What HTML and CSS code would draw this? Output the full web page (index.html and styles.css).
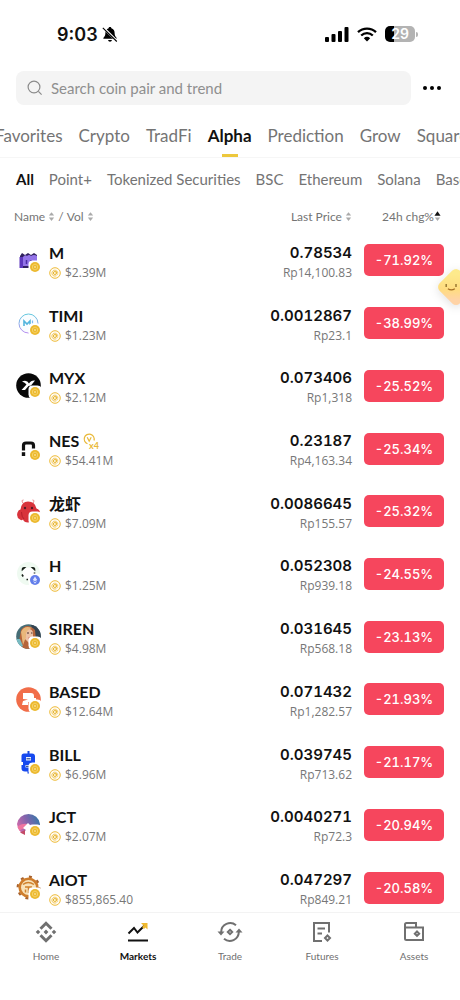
FILE: index.html
```
<!DOCTYPE html>
<html lang="en">
<head>
    <meta charset="UTF-8">
    <meta name="viewport" content="width=device-width, initial-scale=1.0">
    <title>Markets</title>
    <link rel="stylesheet" href="styles.css">
</head>
<body>

    <!-- shared icons -->
    <svg class="sprite" width="0" height="0" aria-hidden="true">
        <symbol id="sort" viewBox="0 0 8 12">
            <path d="M4 1 7 4.800H1z"/>
            <path d="M4 11 1 7.200h6z"/>
        </symbol>
        <symbol id="sort-asc" viewBox="0 0 8 12">
            <path d="M4 0 7.500 5H.5z" fill="#111"/>
            <path d="M4 11 1 7.200h6z"/>
        </symbol>
        <symbol id="alpha" viewBox="0 0 12 12">
            <circle cx="6" cy="6" r="5.300" fill="#fffaf0" stroke="#eebd3d" stroke-width="1"/>
            <circle cx="5.900" cy="6" r="1.500" fill="none" stroke="#e8b52c" stroke-width="1"/>
            <path d="M7.600 4.300v2.500q.2.900 1 .6M8.700 6.500a2.900 2.900 0 1 0-1.300 2.100" fill="none" stroke="#e8b52c" stroke-width=".7"/>
        </symbol>
        <symbol id="bnb" viewBox="0 0 25 25">
            <rect x="12.500" y="12.500" width="13" height="13" rx="4" fill="#fff"/>
            <circle cx="19" cy="19" r="5" fill="#ecb92f"/>
            <path d="m19 16 2.500 1.500v3L19 22l-2.500-1.500v-3z" fill="none" stroke="#f7d774" stroke-width=".8"/>
            <path d="m19 17.900 1.100 1.100-1.100 1.100-1.100-1.100z" fill="#fbe9ae"/>
        </symbol>
        <symbol id="eth" viewBox="0 0 25 25">
            <rect x="12.500" y="12.500" width="13" height="13" rx="4" fill="#fff"/>
            <circle cx="19" cy="19" r="5" fill="#627eea"/>
            <path d="m19 15.500 2.200 3.500-2.200 1.300-2.200-1.300zM16.900 20l2.100 1.300 2.100-1.300-2.100 2.700z" fill="#dfe5ff"/>
        </symbol>
    </svg>

    <div class="status-bar">
        <div class="status-left">
            <span>9:03</span>
            <svg width="16" height="17" viewBox="0 0 16 17">
                <path d="M8 1c.9 0 1.300.5 1.400 1.200 2.200.7 3.200 2.500 3.200 4.600 0 2.600.7 3.700 1.900 4.900.4.500.2 1.100-.5 1.100H2c-.7 0-.9-.6-.5-1.100 1.200-1.200 1.900-2.300 1.900-4.900 0-2.100 1-3.900 3.200-4.600C6.700 1.500 7.100 1 8 1zM6 14h4q-.4 1.800-2 1.800T6 14z"/>
                <path d="m1.500 1.800 13.800 13.600" stroke="#fff" stroke-width="2.400"/>
                <path d="m.8 1.800 14 13.700" stroke="#000" stroke-width="1.100"/>
            </svg>
        </div>
        <div class="status-right">
            <svg width="24" height="15" viewBox="0 0 24 15">
                <rect x="0" y="10" width="4" height="5" rx="1"/>
                <rect x="6.500" y="7" width="4" height="8" rx="1"/>
                <rect x="13" y="4" width="4" height="11" rx="1"/>
                <rect x="19.500" y="0" width="4" height="15" rx="1"/>
            </svg>
            <svg width="20" height="15" viewBox="0 0 20 15">
                <path d="M1 5.200a13 13 0 0 1 18 0M4.200 8.500a8.400 8.400 0 0 1 11.600 0" fill="none" stroke="#000" stroke-width="2.300"/>
                <path d="M10 14.500 6.800 11.200a4.700 4.700 0 0 1 6.400 0z"/>
            </svg>
            <div class="battery">29</div>
        </div>
    </div>

    <div class="search-row">
        <label class="search">
            <svg width="16" height="16" viewBox="0 0 16 16" fill="none" stroke="#8b8b8b" stroke-width="1.200">
                <circle cx="7" cy="7" r="5.900"/>
                <path d="m11.400 11.400 3.200 3.300"/>
            </svg>
            <input type="search" placeholder="Search coin pair and trend" aria-label="Search coin pair and trend">
        </label>
        <button class="more" aria-label="More">
            <svg width="18" height="4" viewBox="0 0 18 4">
                <circle cx="2" cy="2" r="2"/><circle cx="9" cy="2" r="2"/><circle cx="16" cy="2" r="2"/>
            </svg>
        </button>
    </div>

    <nav class="tabs">
        <a href="#">Favorites</a>
        <a href="#">Crypto</a>
        <a href="#">TradFi</a>
        <a href="#" class="active">Alpha</a>
        <a href="#">Prediction</a>
        <a href="#">Grow</a>
        <a href="#">Square</a>
    </nav>

    <nav class="filters">
        <a href="#" class="active">All</a>
        <a href="#">Point+</a>
        <a href="#">Tokenized Securities</a>
        <a href="#">BSC</a>
        <a href="#">Ethereum</a>
        <a href="#">Solana</a>
        <a href="#">Base</a>
    </nav>

    <main>
        <table class="coins">
            <thead>
                <tr>
                    <th class="name">
                        <button>Name <svg class="sort"><use href="#sort"/></svg></button> /
                        <button>Vol <svg class="sort"><use href="#sort"/></svg></button>
                    </th>
                    <th><button>Last Price <svg class="sort"><use href="#sort"/></svg></button></th>
                    <th class="change"><button>24h chg%<svg class="sort"><use href="#sort-asc"/></svg></button></th>
                </tr>
            </thead>
            <tbody>
                <tr>
                    <td>
                        <div class="coin">
                            <svg class="logo" viewBox="0 0 25 25">
                                <path d="M4 8 6 5l3 2 3-2 3 2 3-2 3 2v13H4z" fill="#30215f"/>
                                <path d="M3.500 9H7v11H3.500z" fill="#5d37bd"/>
                                <path d="M7 9q2-3 4-1 2-2 4 0 3-2 6 0v10H7z" fill="#9374e8"/>
                                <path d="M10.500 12v4M15 12v3" stroke="#4b2ba3" stroke-width="1.500"/>
                                <use href="#bnb"/>
                            </svg>
                            <div>
                                <div class="symbol">M</div>
                                <div class="volume"><svg><use href="#alpha"/></svg>$2.39M</div>
                            </div>
                        </div>
                    </td>
                    <td><div class="price">0.78534</div><div class="fiat">Rp14,100.83</div></td>
                    <td class="change"><button class="pct">-71.92%</button></td>
                </tr>
                <tr>
                    <td>
                        <div class="coin">
                            <svg class="logo" viewBox="0 0 25 25">
                                <defs>
                                    <linearGradient id="timi" x1="0" y1="0" x2="0" y2="1">
                                        <stop offset="0" stop-color="#62c9dd"/><stop offset="1" stop-color="#b78df0"/>
                                    </linearGradient>
                                </defs>
                                <circle cx="12.500" cy="12.500" r="9.500" fill="#fafdff" stroke="url(#timi)"/>
                                <path d="M8 15v-5l3 3 3-3v4" fill="none" stroke="#53b5dd" stroke-width="1.600"/>
                                <path d="M16.500 9.500v3" stroke="#80b9ee" stroke-width="1.200"/>
                                <use href="#bnb"/>
                            </svg>
                            <div>
                                <div class="symbol">TIMI</div>
                                <div class="volume"><svg><use href="#alpha"/></svg>$1.23M</div>
                            </div>
                        </div>
                    </td>
                    <td><div class="price">0.0012867</div><div class="fiat">Rp23.1</div></td>
                    <td class="change"><button class="pct">-38.99%</button></td>
                </tr>
                <tr>
                    <td>
                        <div class="coin">
                            <svg class="logo" viewBox="0 0 25 25">
                                <circle cx="12.500" cy="12.500" r="12.300" fill="#080808"/>
                                <path d="M6 8.500q5-2 7 2Q15 7 19 7.500l-4 5-2.500.5L9 17H5.500l5-5.500Q9 9.500 6 8.500z" fill="#fff"/>
                                <use href="#bnb"/>
                            </svg>
                            <div>
                                <div class="symbol">MYX</div>
                                <div class="volume"><svg><use href="#alpha"/></svg>$2.12M</div>
                            </div>
                        </div>
                    </td>
                    <td><div class="price">0.073406</div><div class="fiat">Rp1,318</div></td>
                    <td class="change"><button class="pct">-25.52%</button></td>
                </tr>
                <tr>
                    <td>
                        <div class="coin">
                            <svg class="logo" viewBox="0 0 25 25">
                                <path d="M7.500 14.500V9.500Q7.500 7 10 7h5q2.500 0 2.500 2.500V15" fill="none" stroke="#111" stroke-width="3.200"/>
                                <path d="M5.800 16.200h3.400v3.800H5.800z" fill="#111"/>
                                <use href="#bnb"/>
                            </svg>
                            <div>
                                <div class="symbol">NES
                                    <svg class="boost" viewBox="0 0 17 17">
                                        <path d="M4.500 10.800A5 5 0 1 1 11 7.500" fill="none" stroke="#e9b938" stroke-width="1.200"/>
                                        <path d="m4.200 4.200 2 4 2-4" fill="none" stroke="#e9b938" stroke-width="1.200"/>
                                        <text x="6" y="15.500">x4</text>
                                    </svg>
                                </div>
                                <div class="volume"><svg><use href="#alpha"/></svg>$54.41M</div>
                            </div>
                        </div>
                    </td>
                    <td><div class="price">0.23187</div><div class="fiat">Rp4,163.34</div></td>
                    <td class="change"><button class="pct">-25.34%</button></td>
                </tr>
                <tr>
                    <td>
                        <div class="coin">
                            <svg class="logo" viewBox="0 0 25 25">
                                <path d="M7 4Q5 1 7.500 1M17 4q2-3-.5-3" fill="none" stroke="#e97c7f" stroke-width="1"/>
                                <path d="M12 2.500q7 0 8.500 7 4 1.500 3.500 5l-3 1q-1 8-9 8-4 0-5-3-1.500 1.500-3 0-4-2-2.500-7 1-3 3-3 1-8 7.500-8z" fill="#d8333b"/>
                                <circle cx="9" cy="9" r="1.200" fill="#551b25"/><circle cx="16" cy="9" r="1.200" fill="#551b25"/>
                                <path d="M5.500 13q0 5 2.500 7" fill="none" stroke="#b51f2b"/>
                                <use href="#bnb"/>
                            </svg>
                            <div>
                                <div class="symbol" lang="zh">龙虾</div>
                                <div class="volume"><svg><use href="#alpha"/></svg>$7.09M</div>
                            </div>
                        </div>
                    </td>
                    <td><div class="price">0.0086645</div><div class="fiat">Rp155.57</div></td>
                    <td class="change"><button class="pct">-25.32%</button></td>
                </tr>
                <tr>
                    <td>
                        <div class="coin">
                            <svg class="logo" viewBox="0 0 25 25">
                                <circle cx="12.500" cy="12.500" r="11.500" fill="#effaf1"/>
                                <circle cx="12.500" cy="12.500" r="6" fill="#fff"/>
                                <path d="M6.500 8.500q0-2 2-1.800zM16.500 6.700q2-.2 2 1.800zM6 13.500l1.200 2M10.500 18.500h1.500M18.500 11.500v1.500" fill="#182019" stroke="#182019" stroke-width="1.600"/>
                                <use href="#eth"/>
                            </svg>
                            <div>
                                <div class="symbol">H</div>
                                <div class="volume"><svg><use href="#alpha"/></svg>$1.25M</div>
                            </div>
                        </div>
                    </td>
                    <td><div class="price">0.052308</div><div class="fiat">Rp939.18</div></td>
                    <td class="change"><button class="pct">-24.55%</button></td>
                </tr>
                <tr>
                    <td>
                        <div class="coin">
                            <svg class="logo" viewBox="0 0 25 25">
                                <defs><clipPath id="round"><circle cx="12.500" cy="12.500" r="12.300"/></clipPath></defs>
                                <g clip-path="url(#round)">
                                    <path d="M0 0h25v25H0z" fill="#466d76"/>
                                    <path d="M15 1h10v13l-5 2z" fill="#354451"/>
                                    <path d="M7 25 3 17 5 6q6-8 14 0l1 10-5 9z" fill="#b5643a"/>
                                    <path d="M10 6q5-3 7 2v6l-4 5-4-4z" fill="#edc1a4"/>
                                    <path d="M5 8q3-7 11-4-7 2-6 9l-3 8z" fill="#e9b77b"/>
                                    <path d="M11 9h2M15 9h1.500" stroke="#49302d"/>
                                    <path d="M12.500 14h2.500" stroke="#ba3c42" stroke-width="1.200"/>
                                    <path d="M0 15h4l3 7-4 2z" fill="#77bbc2"/>
                                </g>
                                <use href="#bnb"/>
                            </svg>
                            <div>
                                <div class="symbol">SIREN</div>
                                <div class="volume"><svg><use href="#alpha"/></svg>$4.98M</div>
                            </div>
                        </div>
                    </td>
                    <td><div class="price">0.031645</div><div class="fiat">Rp568.18</div></td>
                    <td class="change"><button class="pct">-23.13%</button></td>
                </tr>
                <tr>
                    <td>
                        <div class="coin">
                            <svg class="logo" viewBox="0 0 25 25">
                                <circle cx="12.500" cy="12.500" r="12.300" fill="#f16d49"/>
                                <path d="M7 6h8q3 0 3 3v2h2v4h-8v3H6l1-4 5-1.500L7 12z" fill="#fff"/>
                                <use href="#bnb"/>
                            </svg>
                            <div>
                                <div class="symbol">BASED</div>
                                <div class="volume"><svg><use href="#alpha"/></svg>$12.64M</div>
                            </div>
                        </div>
                    </td>
                    <td><div class="price">0.071432</div><div class="fiat">Rp1,282.57</div></td>
                    <td class="change"><button class="pct">-21.93%</button></td>
                </tr>
                <tr>
                    <td>
                        <div class="coin">
                            <svg class="logo" viewBox="0 0 25 25">
                                <path d="M12.500 1v4M12.500 20v3.500" stroke="#1649df" stroke-width="2"/>
                                <path d="M8 3.500h8q3 0 3 3v12q0 3-3 3H9q-3.500 0-3.500-3V15H7v-3H5.500V6q0-2.500 2.500-2.500z" fill="#1649ef"/>
                                <path d="M10 7h5v3.500h-5zM9.500 15h6v2.500h-6z" fill="#e8efff"/>
                                <path d="M10.500 8.800h4M10 16.300h4" stroke="#173379"/>
                                <use href="#bnb"/>
                            </svg>
                            <div>
                                <div class="symbol">BILL</div>
                                <div class="volume"><svg><use href="#alpha"/></svg>$6.96M</div>
                            </div>
                        </div>
                    </td>
                    <td><div class="price">0.039745</div><div class="fiat">Rp713.62</div></td>
                    <td class="change"><button class="pct">-21.17%</button></td>
                </tr>
                <tr>
                    <td>
                        <div class="coin">
                            <svg class="logo" viewBox="0 0 25 25">
                                <defs>
                                    <linearGradient id="jct" x1="0" y1=".7" x2="1" y2=".3">
                                        <stop offset="0" stop-color="#d76baa"/><stop offset=".5" stop-color="#8264ad"/><stop offset="1" stop-color="#3677a8"/>
                                    </linearGradient>
                                </defs>
                                <path d="M1 12A11.600 11.600 0 0 1 24 12v3H13v8Q2 22 1 12z" fill="url(#jct)"/>
                                <path d="M1.500 15q4-4 10-3l-1 5q-5-1-7 2z" fill="#ef75a1"/>
                                <path d="m12 11 2 2v11h-3l-5-2 4-4-3-2z" fill="#fff"/>
                                <path d="m4 20.500 5-2.500v5z" fill="#c34a66"/>
                                <use href="#bnb"/>
                            </svg>
                            <div>
                                <div class="symbol">JCT</div>
                                <div class="volume"><svg><use href="#alpha"/></svg>$2.07M</div>
                            </div>
                        </div>
                    </td>
                    <td><div class="price">0.0040271</div><div class="fiat">Rp72.3</div></td>
                    <td class="change"><button class="pct">-20.94%</button></td>
                </tr>
                <tr>
                    <td>
                        <div class="coin">
                            <svg class="logo" viewBox="0 0 25 25">
                                <circle cx="12.500" cy="12.500" r="10.800" fill="none" stroke="#a9622c" stroke-width="2.200" stroke-dasharray="3 5.500"/>
                                <circle cx="12.500" cy="12.500" r="8.800" fill="#f8e2b9" stroke="#cf7d2b" stroke-width="2.600"/>
                                <path d="M7 9.500q5-4 11 0M9 12h7M12.500 12v6M9.500 14.500v3" fill="none" stroke="#cf812d" stroke-width="1.500"/>
                                <use href="#bnb"/>
                            </svg>
                            <div>
                                <div class="symbol">AIOT</div>
                                <div class="volume"><svg><use href="#alpha"/></svg>$855,865.40</div>
                            </div>
                        </div>
                    </td>
                    <td><div class="price">0.047297</div><div class="fiat">Rp849.21</div></td>
                    <td class="change"><button class="pct">-20.58%</button></td>
                </tr>
            </tbody>
        </table>
    </main>

    <nav class="bottom-nav">
        <a href="#">
            <svg viewBox="0 0 24 24" fill="none" stroke="#707070" stroke-width="3">
                <path d="m6.500 8.800 5.500-5.500 5.500 5.500M6.500 15.200l5.500 5.500 5.500-5.500"/>
                <path d="m12 9.600 2.400 2.400-2.400 2.400L9.600 12zM4 9.700 6.300 12 4 14.300 1.700 12zM20 9.700l2.300 2.300-2.300 2.300-2.300-2.300z" fill="#707070" stroke="none"/>
            </svg>
            Home
        </a>
        <a href="#" class="active">
            <svg viewBox="0 0 24 24" fill="none" stroke="#111" stroke-width="2">
                <path d="m2.500 13.500 5.500-5.500 3.500 4.500L18.500 5.500M2 20.500h20"/>
                <path d="M15 3h6.500v6.500L19.500 7.500l-1.500 1.500-2-2L17.500 5.500z" fill="#efb92f" stroke="none"/>
            </svg>
            Markets
        </a>
        <a href="#">
            <svg viewBox="0 0 24 24" fill="none" stroke="#707070" stroke-width="2">
                <path d="M18 5.200A9 9 0 0 0 3.200 12M6 18.800A9 9 0 0 0 20.800 12"/>
                <path d="M-.5 11.500h7L3 15.500zM17.500 12.500h7L21 8.500z" fill="#707070" stroke="none"/>
                <path d="m12 9.800 2.200 2.200-2.200 2.200L9.800 12z"/>
            </svg>
            Trade
        </a>
        <a href="#">
            <svg viewBox="0 0 24 24" fill="none" stroke="#707070" stroke-width="2">
                <path d="M19 12.500V3H4v18h8M7.500 8.500H15M7.500 13.500H12M17.500 15.500l2.500 2.500-2.500 2.500L15 18z"/>
            </svg>
            Futures
        </a>
        <a href="#">
            <svg viewBox="0 0 24 24" fill="none" stroke="#707070" stroke-width="2">
                <path d="M3 7.500V4.500Q3 3 4.500 3H14v4.500M3 7.500h18V20H4.500Q3 20 3 18.500zM15 11.500l2.200 2.200-2.200 2.200-2.200-2.200z"/>
            </svg>
            Assets
        </a>
    </nav>

    <button class="helper" aria-label="Helper">
        <svg width="44" height="44" viewBox="0 0 38 38">
            <defs>
                <linearGradient id="smile" x1="0" y1="0" x2="0" y2="1">
                    <stop offset="0" stop-color="#fdea8c"/><stop offset=".6" stop-color="#ffdc80"/><stop offset="1" stop-color="#ffd3a6"/>
                </linearGradient>
            </defs>
            <path d="m19 8 11 11-11 11L8 19z" fill="url(#smile)" stroke="url(#smile)" stroke-width="9" stroke-linejoin="round"/>
            <path d="M10.500 16.500v2.500M19 16.500v2.500" stroke="#7d5c1b" stroke-width="1"/>
            <path d="M12 20.500q3 2 6 0" fill="none" stroke="#a46e24" stroke-width="1"/>
        </svg>
    </button>

</body>
</html>
```
FILE: styles.css
```
* {
    box-sizing: border-box;
}

body {
    font-family: Lato, "Noto Sans CJK SC", sans-serif;
    background-color: #fff;
    color: #111;
    margin: 0;
    height: 100vh;
    display: flex;
    flex-direction: column;
    overflow: hidden;
    position: relative;
}

a {
    color: inherit;
    text-decoration: none;
}

button {
    font: inherit;
    color: inherit;
    background: none;
    border: 0;
    padding: 0;
}

.sprite {
    position: absolute;
}

.status-bar {
    display: flex;
    justify-content: space-between;
    align-items: center;
    height: 68px;
    padding: 0 45px 0 57px;
}

.status-left,
.status-right {
    display: flex;
    align-items: center;
}

.status-left {
    font-family: Inter, sans-serif;
    font-size: 18px;
    font-weight: 600;
    gap: 4px;
}

.status-right {
    gap: 8px;
}

.battery {
    font-family: Inter, sans-serif;
    font-size: 14px;
    font-weight: 600;
    line-height: 16px;
    width: 30px;
    height: 16px;
    border-radius: 5px;
    text-align: center;
    color: #fff;
    background: linear-gradient(to right, #000 9px, #b3b3b3 9px);
    position: relative;
}

.battery::after {
    content: "";
    position: absolute;
    left: 31px;
    top: 6px;
    width: 2px;
    height: 5px;
    border-radius: 0 2px 2px 0;
    background-color: #b3b3b3;
}

.search-row {
    display: flex;
    align-items: center;
    padding: 3px 19px 0 16px;
    gap: 12px;
}

.search {
    flex: 1;
    display: flex;
    align-items: center;
    gap: 8px;
    height: 34px;
    padding: 0 11px;
    border-radius: 8px;
    background-color: #f4f4f4;
}

.search input {
    flex: 1;
    min-width: 0;
    border: 0;
    padding: 0;
    outline: 0;
    background: none;
    font-family: inherit;
    font-size: 15px;
}

.search input::placeholder {
    color: #8f8f8f;
}

.more {
    display: flex;
}

.tabs,
.filters {
    display: flex;
    align-items: center;
    white-space: nowrap;
    overflow: hidden;
    flex-shrink: 0;
    color: #747474;
}

/* scrolled a little to the right, so the first tab is cut */
.tabs {
    height: 53px;
    gap: 16px;
    font-size: 17px;
    border-bottom: 1px solid #f6f6f6;
}

.tabs a:first-child {
    margin-left: -5px;
}

.tabs a {
    height: 100%;
    line-height: 62px;
}

.tabs .active {
    color: #111;
    font-weight: bold;
    background: linear-gradient(#edc83c, #edc83c) center bottom / 16px 3px no-repeat;
}

.filters {
    height: 42px;
    padding-left: 16px;
    gap: 15px;
    font-size: 15px;
}

.filters .active {
    color: #111;
    font-weight: bold;
}

/* the last row runs a little under the bottom bar */
main {
    flex: 1;
    min-height: 0;
    margin-bottom: -7px;
}

.coins {
    width: 100%;
    height: 100%;
    border-collapse: collapse;
}

.coins th {
    height: 29px;
    padding: 4px 0 0;
    font-size: 12px;
    font-weight: normal;
    text-align: right;
    color: #747474;
}

.coins th.name {
    text-align: left;
    padding-left: 14px;
}

.sort {
    width: 7px;
    height: 11px;
    vertical-align: -1px;
    fill: #aaa;
}

.coins td {
    padding: 0;
    text-align: right;
}

.coins .change {
    width: 108px;
    padding-right: 16px;
}

.coins th.change {
    padding-right: 19px;
}

.coin {
    display: flex;
    align-items: center;
    gap: 8px;
    padding-left: 16px;
    text-align: left;
}

.logo {
    width: 25px;
    height: 25px;
}

.symbol,
.price {
    padding-top: 3px;
    line-height: 22px;
}

.symbol {
    font-size: 16px;
    font-weight: bold;
}

.price,
.pct {
    font-family: Inter, sans-serif;
    font-variant-numeric: tabular-nums;
}

.price {
    font-size: 15px;
    font-weight: 600;
}

.volume,
.fiat {
    font-family: "Open Sans", sans-serif;
    font-size: 12px;
    line-height: 18px;
    color: #777;
}

.symbol,
.volume {
    display: flex;
    align-items: center;
    gap: 4px;
}

.volume svg {
    width: 12px;
    height: 12px;
}

.boost {
    width: 17px;
    height: 17px;
}

.boost text {
    font-size: 9px;
    fill: #e9b938;
}

.pct {
    width: 80px;
    height: 32px;
    border-radius: 5px;
    background-color: #f6465d;
    color: #fff;
    font-size: 13px;
    font-weight: 500;
}

.bottom-nav {
    display: flex;
    height: 88px;
    padding-top: 7px;
    border-top: 1px solid #f3f3f3;
    background-color: #fff;
    font-size: 10px;
    color: #707070;
    position: relative;
}

.bottom-nav a {
    flex: 1;
    display: flex;
    flex-direction: column;
    align-items: center;
    gap: 6px;
}

.bottom-nav svg {
    width: 24px;
    height: 24px;
    overflow: visible;
}

.bottom-nav .active {
    color: #111;
    font-weight: bold;
}

/* floating mascot, half off the right edge */
.helper {
    position: absolute;
    right: -18px;
    top: 265px;
    display: flex;
    filter: drop-shadow(0 2px 5px rgba(0, 0, 0, 0.12));
}
```
